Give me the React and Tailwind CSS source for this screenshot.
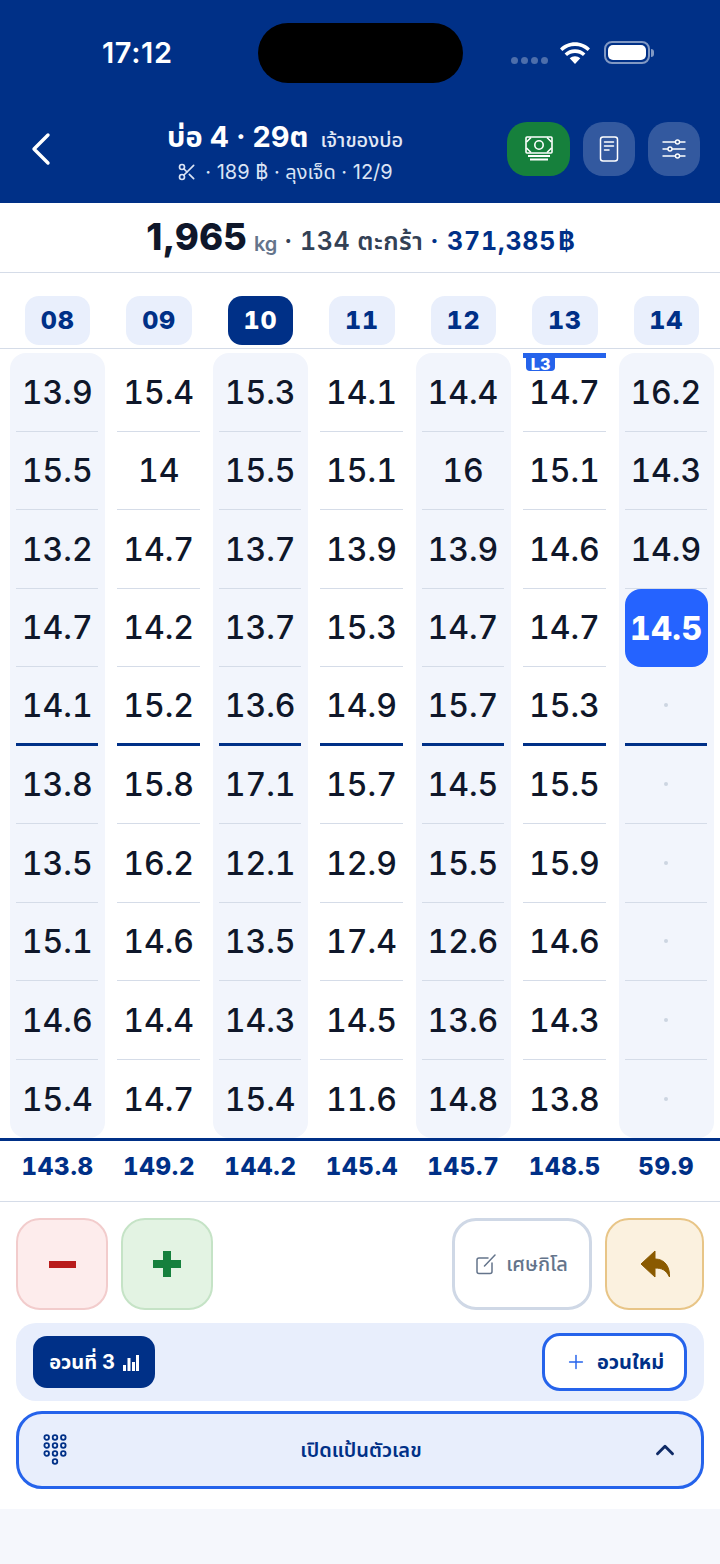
import React from 'react';
import { ChevronUp, Plus, Scissors } from 'lucide-react';

const columns = [
  { hour: '08', total: '143.8', shaded: true, values: ['13.9', '15.5', '13.2', '14.7', '14.1', '13.8', '13.5', '15.1', '14.6', '15.4'] },
  { hour: '09', total: '149.2', values: ['15.4', '14', '14.7', '14.2', '15.2', '15.8', '16.2', '14.6', '14.4', '14.7'] },
  { hour: '10', total: '144.2', shaded: true, active: true, values: ['15.3', '15.5', '13.7', '13.7', '13.6', '17.1', '12.1', '13.5', '14.3', '15.4'] },
  { hour: '11', total: '145.4', values: ['14.1', '15.1', '13.9', '15.3', '14.9', '15.7', '12.9', '17.4', '14.5', '11.6'] },
  { hour: '12', total: '145.7', shaded: true, values: ['14.4', '16', '13.9', '14.7', '15.7', '14.5', '15.5', '12.6', '13.6', '14.8'] },
  { hour: '13', total: '148.5', level: 'L3', values: ['14.7', '15.1', '14.6', '14.7', '15.3', '15.5', '15.9', '14.6', '14.3', '13.8'] },
  { hour: '14', total: '59.9', shaded: true, values: ['16.2', '14.3', '14.9', '14.5', '', '', '', '', '', ''], selected: 3 },
];

const thai = "font-['Inter','Noto_Sans_Thai','Noto_Sans','Liberation_Sans',sans-serif]";

const BackIcon = () => (
  <svg width="22" height="34" viewBox="0 0 22 34" fill="none" stroke="white" strokeWidth="3.4" strokeLinecap="round" strokeLinejoin="round">
    <path d="M18 3 L4 17 L18 31" />
  </svg>
);

const MoneyIcon = () => (
  <svg width="30" height="30" viewBox="0 0 30 30" fill="none" stroke="white" strokeWidth="1.6">
    <rect x="2" y="3" width="26" height="16" rx="1" />
    <circle cx="15" cy="11" r="4.2" />
    <path d="M2.5 8 L7 3.5 M23 3.5 L27.5 8 M2.5 14 L7 18.5 M23 18.5 L27.5 14" />
    <path d="M4 22 H26 M6 25.5 H24" strokeWidth="1.8" />
  </svg>
);

const NoteIcon = () => (
  <svg width="24" height="30" viewBox="0 0 24 30" fill="none" stroke="white" strokeWidth="1.5" strokeLinecap="round">
    <rect x="3.5" y="3" width="17" height="24" rx="2.5" />
    <path d="M7.5 8 H16.5 M7.5 12 H16.5 M7.5 16 H12" />
  </svg>
);

const SlidersIcon = () => (
  <svg width="26" height="24" viewBox="0 0 26 24" fill="none" stroke="white" strokeWidth="1.4" strokeLinecap="round">
    <path d="M2 5 H24 M2 12 H24 M2 19 H24" />
    <circle cx="16.5" cy="5" r="2" fill="#33548f" />
    <circle cx="9" cy="12" r="2" fill="#33548f" />
    <circle cx="16.5" cy="19" r="2" fill="#33548f" />
  </svg>
);

const WifiIcon = () => (
  <svg width="34" height="26" viewBox="0 0 32 24" fill="white">
    <path d="M16 4.5c4.6 0 8.8 1.8 11.9 4.7l2.2-2.4C26.4 3.2 21.4 1 16 1S5.600 3.200 1.900 6.800l2.200 2.400C7.200 6.300 11.400 4.500 16 4.500z" />
    <path d="M16 11c2.900 0 5.500 1.100 7.500 2.900l2.300-2.400C23.200 9 19.800 7.600 16 7.600s-7.200 1.400-9.800 3.900l2.300 2.400c2-1.800 4.600-2.900 7.500-2.900z" />
    <path d="M16 14.200c-1.900 0-3.600.7-5 1.900l5 5.400 5-5.400c-1.400-1.200-3.100-1.900-5-1.900z" />
  </svg>
);

const KeypadIcon = () => (
  <svg width="24" height="32" viewBox="0 0 24 32" fill="none" stroke="#003087" strokeWidth="1.800">
    {[3.700, 12, 20.300].flatMap((x) => [3.500, 11.500, 19.500].map((y) => <circle key={`${x}-${y}`} cx={x} cy={y} r="2.300" />))}
    <circle cx="12" cy="27.500" r="2.300" />
  </svg>
);

const ThickPlus = () => (
  <svg width="28" height="26" viewBox="0 0 28 26" fill="#15803d">
    <path d="M10 0 H18 V9 H28 V17 H18 V26 H10 V17 H0 V9 H10 Z" />
  </svg>
);

const UndoIcon = () => (
  <svg width="30" height="28" viewBox="0 0 30 28" fill="#8a5a00">
    <path d="M1 14 L15 1 V9 C25 9 30 17 29.500 27 C26 20 22 18 15 18 V27 Z" strokeLinejoin="round" stroke="#8a5a00" strokeWidth="1" />
  </svg>
);

const EditIcon = () => (
  <svg width="20" height="21" viewBox="0 0 20 21" fill="none" stroke="#64748b" strokeWidth="1.5" strokeLinecap="round" strokeLinejoin="round">
    <path d="M12 4 H3 a2 2 0 0 0 -2 2 V17.500 a2 2 0 0 0 2 2 H14 a2 2 0 0 0 2 -2 V9" />
    <path d="M8.500 12 L19 1" />
  </svg>
);

const Cell = ({ value, index, selected }) => {
  const isLast = index === 9;
  const isMark = index === 4;
  return (
    <div
      className={`h-[78.5px] flex items-center justify-center box-border ${
        selected
          ? 'mx-[6px] bg-[#2563ff] rounded-[16px]'
          : isLast
            ? 'ml-[6px] mr-[7px]'
            : isMark
              ? 'ml-[6px] mr-[7px] border-b-[3px] border-[#003087]'
              : 'ml-[6px] mr-[7px] border-b border-[#d5dce8]'
      }`}
    >
      {value ? (
        <span
          className={`tabular-nums pt-[2px] ${
            selected ? 'text-[32px] font-extrabold text-white tracking-[0.5px]' : 'text-[32px] font-[550] text-[#0f172a]'
          }`}
        >
          {value}
        </span>
      ) : (
        <span className="w-[4px] h-[4px] rounded-full bg-[#cdd5e1]" />
      )}
    </div>
  );
};

export default function App() {
  return (
    <div className={`w-[720px] h-[1564px] bg-[#f5f7fc] ${thai} overflow-hidden`}>
      {/* header */}
      <div className="h-[203px] bg-[#003087] text-white">
        <div className="h-[122px] pt-[23px] relative">
          <div className="absolute left-[102px] top-[35px] text-[29px] font-semibold leading-[36px] tracking-[0.6px]">17:12</div>
          <div className="ml-[258px] w-[205px] h-[60px] rounded-full bg-black" />
          <div className="absolute left-[511px] top-[57px] flex gap-[3px]">
            <span className="w-[7px] h-[7px] rounded-full bg-white/30" />
            <span className="w-[7px] h-[7px] rounded-full bg-white/30" />
            <span className="w-[7px] h-[7px] rounded-full bg-white/30" />
            <span className="w-[7px] h-[7px] rounded-full bg-white/30" />
          </div>
          <div className="absolute left-[558px] top-[41px]"><WifiIcon /></div>
          <div className="absolute left-[604px] top-[41px] flex items-center">
            <div className="w-[46px] h-[23px] rounded-[8px] border-2 border-white/50 p-[2px]">
              <div className="w-full h-full rounded-[5px] bg-white" />
            </div>
            <div className="w-[3px] h-[8px] rounded-r-full bg-white/50 ml-[1px]" />
          </div>
        </div>
        <div className="h-[54px] flex items-center pl-[30px] pr-[20px]">
          <BackIcon />
          <div className="w-[430px] ml-[18px] self-start -mt-[2px] flex flex-col items-center">
            <div className="flex items-baseline gap-[12px] leading-[34px]">
              <span className="text-[29px] font-bold">บ่อ 4 · 29ต</span>
              <span className="text-[20px] font-medium text-[#e2e8f5]">เจ้าของบ่อ</span>
            </div>
            <div className="flex items-center gap-[8px] text-[20px] leading-[28px] text-[#dbe4f5] mt-[1px]">
              <Scissors size={20} />
              <span>· 189 ฿ · ลุงเจ็ด · 12/9</span>
            </div>
          </div>
          <div className="ml-auto flex gap-[13px]">
            <div className="w-[63px] h-[54px] rounded-[20px] bg-[#16803c] flex items-center justify-center"><MoneyIcon /></div>
            <div className="w-[52px] h-[54px] rounded-[20px] bg-white/20 flex items-center justify-center"><NoteIcon /></div>
            <div className="w-[52px] h-[54px] rounded-[20px] bg-white/20 flex items-center justify-center"><SlidersIcon /></div>
          </div>
        </div>
      </div>

      {/* summary */}
      <div className="h-[70px] bg-white border-b border-[#d5dce8] flex items-center justify-center gap-[7px] pl-[2px]">
        <span className="text-[36.500px] font-extrabold text-[#0f172a]">1,965</span>
        <span className="text-[20px] font-semibold text-[#64748b] mt-[12px]">kg</span>
        <span className="text-[25px] font-semibold text-[#334155] mt-[8px] tabular-nums tracking-[0.5px]">· 134 ตะกร้า</span>
        <span className="text-[25px] font-bold text-[#003087] mt-[8px] tabular-nums tracking-[0.8px]">
          · 371,385<span className="ml-[2px]">฿</span>
        </span>
      </div>

      {/* hour tabs */}
      <div className="h-[76px] bg-white border-b border-[#d5dce8] grid grid-cols-7 pl-[7px] pr-[3px] pt-[23px]">
        {columns.map((col) => (
          <div key={col.hour} className="flex justify-center">
            <div
              className={`w-[65.500px] h-[49px] rounded-[14px] flex items-center justify-center text-[25px] font-extrabold tabular-nums tracking-[0.8px] ${
                col.active ? 'bg-[#003087] text-white' : 'bg-[#e9effc] text-[#003087]'
              }`}
            >
              {col.hour}
            </div>
          </div>
        ))}
      </div>

      {/* weights */}
      <div className="h-[792px] bg-white grid grid-cols-7 pl-[7px] pr-[3px] pt-[4px] border-b-[3px] border-[#003087]">
        {columns.map((col) => (
          <div
            key={col.hour}
            className={`mx-[3px] h-[785px] rounded-[16px] relative ${col.shaded ? 'bg-[#f2f5fc]' : ''}`}
          >
            {col.level && (
              <div className="absolute left-[6px] right-[7px] top-0 h-[5px] bg-[#2563eb]">
                <span className="absolute left-[3px] top-[5px] w-[29px] h-[13px] rounded-b-[4px] bg-[#2563eb] text-white text-[16px] font-extrabold leading-[13px] text-center">
                  {col.level}
                </span>
              </div>
            )}
            {col.values.map((value, i) => (
              <Cell key={i} value={value} index={i} selected={col.selected === i} />
            ))}
          </div>
        ))}
      </div>

      {/* totals */}
      <div className="h-[61px] bg-white border-b border-[#d5dce8] grid grid-cols-7 pl-[7px] pr-[3px] items-center pb-[9px]">
        {columns.map((col) => (
          <div key={col.hour} className="text-center text-[24px] font-extrabold text-[#003087] tabular-nums tracking-[0.8px]">{col.total}</div>
        ))}
      </div>

      {/* controls */}
      <div className="h-[307px] bg-white px-[16px] pt-[16px]">
        <div className="flex gap-[13px]">
          <button className="w-[92px] h-[92px] rounded-[24px] bg-[#fdecec] border-2 border-[#f2cccc] flex items-center justify-center">
            <span className="w-[27px] h-[7px] bg-[#b91c1c]" />
          </button>
          <button className="w-[92px] h-[92px] rounded-[24px] bg-[#e3f3e3] border-2 border-[#c5e3c6] flex items-center justify-center">
            <ThickPlus />
          </button>
          <button className="ml-auto w-[140px] h-[92px] rounded-[24px] bg-white border-[3px] border-[#cfd8e6] flex items-center justify-center gap-[10px] text-[20px] font-medium text-[#64748b]">
            <EditIcon />
            เศษกิโล
          </button>
          <button className="w-[99px] h-[92px] rounded-[24px] bg-[#fbf1df] border-2 border-[#e8c587] flex items-center justify-center">
            <UndoIcon />
          </button>
        </div>
        <div className="mt-[13px] h-[78px] rounded-[20px] bg-[#e8eefc] flex items-center justify-between pl-[17px] pr-[17px]">
          <div className="w-[122px] h-[52px] rounded-[14px] bg-[#003087] text-white flex items-center justify-center gap-[8px] text-[20px] font-bold">
            อวนที่ 3
            <svg width="16" height="18" viewBox="0 0 16 18" fill="white">
              <rect x="0" y="12" width="3" height="6" />
              <rect x="4.500" y="5" width="3" height="13" />
              <rect x="9" y="9" width="3" height="9" />
              <rect x="13" y="2" width="3" height="16" />
            </svg>
          </div>
          <div className="w-[145px] h-[58px] rounded-[18px] bg-white border-[3px] border-[#2563eb] flex items-center justify-center gap-[10px] text-[20px] font-bold text-[#003087]">
            <Plus size={22} strokeWidth={1.6} className="text-[#2563eb]" />
            อวนใหม่
          </div>
        </div>
        <div className="mt-[10px] h-[78px] rounded-[26px] bg-[#e8eefc] border-[3px] border-[#2563eb] flex items-center justify-between pl-[24px] pr-[21px]">
          <KeypadIcon />
          <span className="ml-[5px] text-[20px] font-semibold text-[#003087]">เปิดแป้นตัวเลข</span>
          <ChevronUp size={30} strokeWidth={2.300} className="text-[#0f2a66]" />
        </div>
      </div>
    </div>
  );
}
